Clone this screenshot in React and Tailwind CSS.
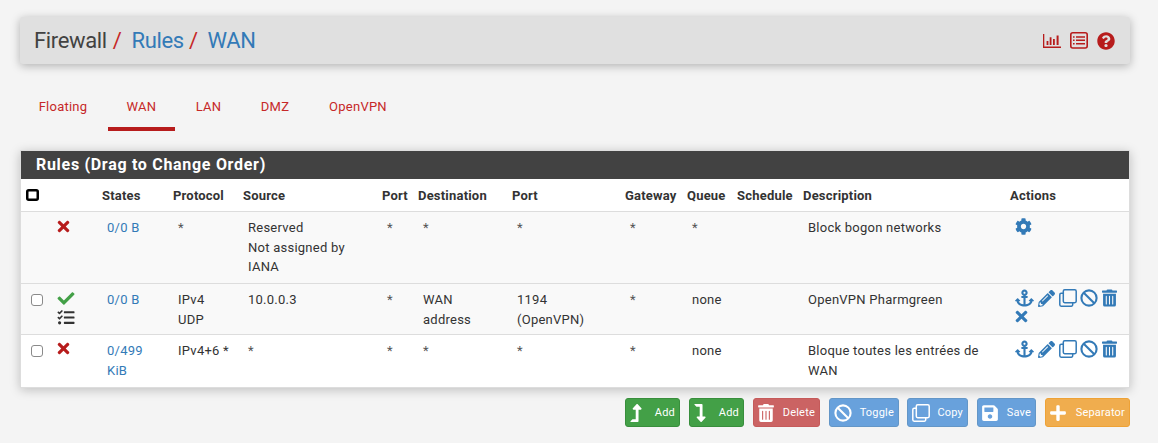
import React from "react";
import {
  FaTimes, FaCheck, FaTasks, FaCog, FaAnchor, FaPencilAlt, FaTrashAlt,
  FaLevelUpAlt, FaLevelDownAlt, FaSave, FaPlus, FaQuestionCircle,
} from "react-icons/fa";

const columns =
  "grid grid-cols-[26px_50px_71px_70px_139px_36px_94px_113px_62px_50px_66px_207px_1fr]";

const ChartIcon = () => (
  <svg width="18" height="14" viewBox="0 0 18 14" fill="currentColor">
    <path d="M0 0h1.3v12.4H18V14H0zM3.6 7h1.8v4H3.6zM6.7 3.2h1.8V11H6.7zM10 5h1.8v6H10zM13.6 1.6h2V11h-2z" />
  </svg>
);

const ListIcon = () => (
  <svg width="18" height="17" viewBox="0 0 18 17" fill="none" stroke="currentColor">
    <rect x="0.8" y="0.8" width="16.4" height="15.2" rx="2" strokeWidth="1.6" />
    <path d="M3 5h1.6M6 5h9M3 8.3h1.6M6 8.3h9M3 11.7h1.6M6 11.7h9" strokeWidth="1.5" />
  </svg>
);

const CloneIcon = ({ className }) => (
  <svg className={className} viewBox="0 0 18 18" fill="none" stroke="currentColor" strokeWidth="1.5">
    <rect x="4.3" y="0.8" width="12.9" height="12.9" rx="1.4" />
    <path d="M4 4.3H2.2A1.4 1.4 0 0 0 .8 5.7v10.1a1.4 1.4 0 0 0 1.4 1.4h10.1a1.4 1.4 0 0 0 1.4-1.4V14" />
  </svg>
);

const BanIcon = ({ className }) => (
  <svg className={className} viewBox="0 0 18 18" fill="none" stroke="currentColor" strokeWidth="2.1">
    <circle cx="9" cy="9" r="7.6" />
    <path d="M3.7 3.7l10.6 10.6" />
  </svg>
);

const tabs = [
  { label: "Floating", box: "w-[68px] mr-[11px]" },
  { label: "WAN", box: "w-[67px]", active: true },
  { label: "LAN", box: "w-[67px]" },
  { label: "DMZ", box: "w-[66px]" },
  { label: "OpenVPN", box: "w-[100px]" },
];

const headers = ["States", "Protocol", "Source", "Port", "Destination", "Port", "Gateway", "Queue", "Schedule", "Description", "Actions"];

const rules = [
  {
    height: "h-[72px] pt-[6px] bg-[#f9f9f9]",
    status: <FaTimes className="h-[17px] w-[13px] text-[#b71c1c]" />,
    cells: ["0/0 B", "*", "Reserved\nNot assigned by\nIANA", "*", "*", "*", "*", "*", "", "Block bogon networks"],
    actions: "settings",
  },
  {
    height: "h-[51px] pt-[6px] bg-[#f9f9f9]",
    check: true,
    status: (
      <>
        <FaCheck className="h-[17px] w-[18px] text-[#43a047]" />
        <FaTasks className="mt-[2px] h-[17px] w-[18px] text-[#333]" />
      </>
    ),
    cells: ["0/0 B", "IPv4\nUDP", "10.0.0.3", "*", "WAN\naddress", "1194\n(OpenVPN)", "*", "none", "", "OpenVPN Pharmgreen"],
    actions: "removable",
  },
  {
    height: "h-[52px] pt-[6px] bg-white",
    check: true,
    status: <FaTimes className="-mt-px h-[17px] w-[13px] text-[#b71c1c]" />,
    cells: ["0/499\nKiB", "IPv4+6 *", "*", "*", "*", "*", "*", "none", "", "Bloque toutes les entrées de\nWAN"],
    actions: "basic",
  },
];

const Checkbox = () => (
  <span className="mt-[4px] block size-[12px] rounded-[3px] border border-[#8a8a8a] bg-white" />
);

function Actions({ kind }) {
  if (kind === "settings") return <FaCog className="h-[17px] w-[17px]" />;
  return (
    <>
      <div className="-mt-px flex h-[18px] items-center">
        <FaAnchor className="h-[18px] w-[19px]" />
        <FaPencilAlt className="ml-[4px] size-[17px]" />
        <CloneIcon className="ml-[4px] size-[18px]" />
        <BanIcon className="ml-[3px] size-[18px]" />
        <FaTrashAlt className="ml-[4px] h-[18px] w-[15px]" />
      </div>
      {kind === "removable" && <FaTimes className="mt-[1px] h-[17px] w-[13px]" />}
    </>
  );
}

const buttons = [
  { label: "Add", icon: <FaLevelUpAlt className="h-[18px] w-[12px]" />, box: "w-[55px] bg-[#43a047] border-[#388e3c]" },
  { label: "Add", icon: <FaLevelDownAlt className="h-[18px] w-[12px]" />, box: "ml-[9px] w-[55px] bg-[#43a047] border-[#388e3c]" },
  { label: "Delete", icon: <FaTrashAlt className="h-[18px] w-[16px]" />, box: "ml-[9px] w-[67px] bg-[#cb6363] border-[#c55a5a]" },
  { label: "Toggle", icon: <BanIcon className="size-[18px]" />, box: "ml-[9px] w-[70px] bg-[#68a1dc] border-[#6396c7]" },
  { label: "Copy", icon: <CloneIcon className="size-[18px]" />, box: "ml-[8px] w-[61px] bg-[#68a1dc] border-[#6396c7]" },
  { label: "Save", icon: <FaSave className="h-[18px] w-[16px]" />, box: "ml-[9px] w-[59px] bg-[#68a1dc] border-[#6396c7]" },
  { label: "Separator", icon: <FaPlus className="h-[18px] w-[16px]" />, box: "ml-[9px] w-[85px] bg-[#f0ad4e] border-[#eea236]" },
];

export default function App() {
  return (
    <div className="h-[443px] w-[1158px] overflow-hidden bg-[#f4f4f4] pt-[17px] pl-5 font-[Roboto,sans-serif] text-[13px] leading-[19.5px] text-[#333]">
      <header className="flex h-[47px] w-[1110px] items-center rounded-[3px] bg-[#e0e0e0] pr-[15px] pl-[14px] shadow-[0_2px_10px_rgba(0,0,0,0.28)]">
        <h1 className="flex text-[22px] leading-none tracking-[-0.35px] text-[#424242]">
          <span>Firewall</span>
          <span className="ml-[6px] text-[#c62828]">/</span>
          <a className="ml-[10px] text-[#337ab7]">Rules</a>
          <span className="ml-[5px] text-[#c62828]">/</span>
          <a className="ml-[10px] text-[#337ab7]">WAN</a>
        </h1>
        <div className="ml-auto flex items-center gap-[9px] text-[#b71c1c]">
          <ChartIcon />
          <ListIcon />
          <FaQuestionCircle className="size-[18px]" />
        </div>
      </header>

      <nav className="mt-[21px] ml-[9px] flex h-[45px] text-[#c62828]">
        {tabs.map((t) => (
          <a
            key={t.label}
            className={`flex h-[46px] justify-center pt-[12px] text-[13px] tracking-[0.25px] ${t.box} ${t.active ? "border-b-4 border-[#b71c1c]" : ""} `}
          >
            {t.label}
          </a>
        ))}
      </nav>

      <section className="mt-[20px] w-[1110px] border border-[#ddd] bg-white shadow-[0_2px_10px_rgba(0,0,0,0.22)]">
        <h2 className="h-[28px] bg-[#424242] pl-[15px] text-[16px] leading-[27px] font-bold tracking-[0.7px] text-white">
          Rules (Drag to Change Order)
        </h2>
        <div className={`${columns} h-[33px] border-b border-[#ddd] pt-[7px] font-bold tracking-[0.2px]`}>
          <div className="pt-[3px] pl-[5px]">
            <svg width="13" height="12" viewBox="0 0 13 12" fill="none" stroke="#000" strokeWidth="2.5">
              <rect x="1.25" y="1.25" width="10.5" height="9.5" rx="1.5" />
            </svg>
          </div>
          <div />
          {headers.map((h, i) => (
            <div key={i} className="pl-[5px]">{h}</div>
          ))}
        </div>
        {rules.map((r, i) => (
          <div key={i} className={`${columns} ${r.height} ${i < 2 ? "border-b border-[#ddd]" : ""}`}>
            <div className="pl-[10px]">{r.check && <Checkbox />}</div>
            <div className="pl-[10px]">{r.status}</div>
            {r.cells.map((c, j) => (
              <div key={j} className={`pl-[10px] whitespace-pre tracking-[0.25px] ${j === 0 ? "text-[#337ab7]" : ""} ${c === "*" ? "text-[#555]" : ""}`}>
                {c}
              </div>
            ))}
            <div className="pl-[10px] text-[#337ab7]"><Actions kind={r.actions} /></div>
          </div>
        ))}
      </section>

      <div className="mt-[10px] flex w-[1110px] justify-end text-white">
        {buttons.map((b, i) => (
          <button
            key={i}
            className={`flex h-[29px] items-center justify-between rounded-[3px] border pr-[4px] pl-[4px] text-[11px] tracking-[0.2px] ${b.box}`}
          >
            {b.icon}
            <span className="pt-px">{b.label}</span>
          </button>
        ))}
      </div>
    </div>
  );
}
